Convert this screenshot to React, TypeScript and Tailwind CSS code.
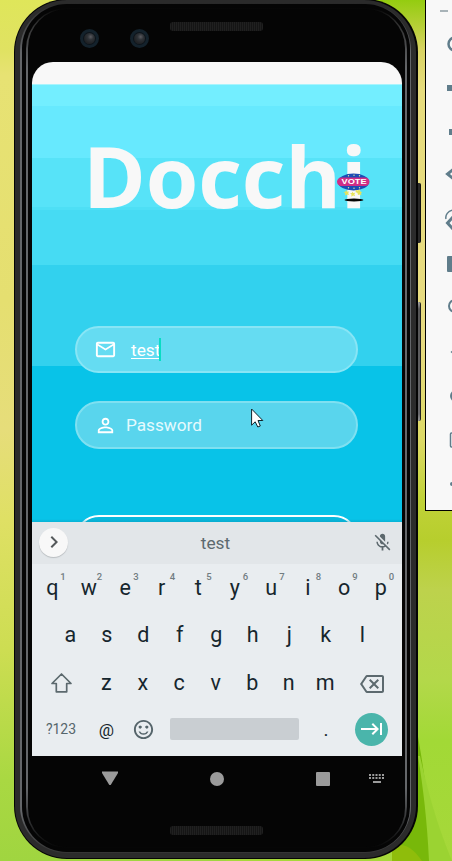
import type { ReactNode } from 'react';
import {
  MdChevronRight,
  MdKeyboardTab,
  MdMicOff,
  MdOutlineBackspace,
  MdOutlineMail,
  MdPersonOutline,
  MdSentimentSatisfiedAlt,
} from 'react-icons/md';

const topRow = ['q', 'w', 'e', 'r', 't', 'y', 'u', 'i', 'o', 'p'];
const homeRow = ['a', 's', 'd', 'f', 'g', 'h', 'j', 'k', 'l'];
const bottomRow = ['z', 'x', 'c', 'v', 'b', 'n', 'm'];

function Wallpaper() {
  return (
    <>
      <div className="absolute inset-0 bg-[linear-gradient(to_bottom,#dfe65a_0px,#e0e262_50px,#e7e273_75px,#e5df70_300px,#e6dd7a_430px,#dfe064_520px,#cddd52_650px,#a9d842_780px,#a0d540_861px)]" />
      <div className="absolute inset-y-0 left-[226px] right-0 bg-[linear-gradient(to_bottom,#94cc10_0px,#b5cf35_25px,#d8d363_50px,#e6dc7e_90px,#e6da80_340px,#dcd966_440px,#c0d238_500px,#b7ce2d_540px,#bdd24c_590px,#b3d84a_680px,#a2d936_740px,#a6d83a_861px)]" />
      <svg className="absolute bottom-0 right-0" width="60" height="240" viewBox="0 0 60 240" fill="none">
        <path d="M24 105C30 135 37 185 42 240H0V210L24 170Z" fill="#78b80a" />
        <path d="M28 135C38 180 46 205 60 240H37C35 195 30 160 26 135Z" fill="#9bd332" />
        <path d="M0 225C15 220 24 232 30 240H0Z" fill="#8fbd0b" />
      </svg>
    </>
  );
}

function Camera() {
  return (
    <div className="flex size-[19px] items-center justify-center rounded-full border-[3px] border-[#14222c] bg-[#0d141a]">
      <div className="size-[11px] rounded-full bg-[radial-gradient(circle_at_60%_35%,#5b5b60_0,#2f3338_30%,#1f2124_70%,#2c3034_100%)]" />
    </div>
  );
}

function Speaker() {
  return (
    <div className="h-[9px] w-[93px] rounded-[3px] bg-[repeating-linear-gradient(90deg,#202020_0_1px,#151515_1px_2px)]" />
  );
}

function VoteBadge() {
  return (
    <svg className="absolute left-[304px] top-[89px]" width="35" height="32" viewBox="0 0 35 32">
      <ellipse cx="17.5" cy="9" rx="15.5" ry="8.5" fill="#1b4cb4" />
      <g fill="#dfe7a0">
        <circle cx="12.5" cy="2.8" r=".7" />
        <circle cx="18" cy="2.3" r=".7" />
        <circle cx="23.5" cy="2.8" r=".7" />
        <circle cx="12.5" cy="14.8" r=".7" />
        <circle cx="18" cy="15.3" r=".7" />
        <circle cx="23.5" cy="14.8" r=".7" />
      </g>
      <rect x="1" y="4.5" width="32.5" height="8.6" rx="4.3" fill="#cf2d86" />
      <text x="5.6" y="11" textLength="25" lengthAdjust="spacingAndGlyphs" fontFamily="'Liberation Sans', sans-serif" fontWeight="700" fontSize="6.4" fill="#fff">
        VOTE
      </text>
      <g fill="#e8e35a">
        <path d="M10 17l1.2 1.8 2-.3-1 1.6.8 2-2-.7L9 22.5l.3-2.2L7.5 19l2-.2z" />
        <path d="M16 18.5l1.3 1.5 2-.3-1 1.6.8 2-2-.7-1.8 1.2.2-2.2-1.5-1.3 2-.2z" />
        <path d="M20 17l2 .5 1.5-1.2.5 2 2 1-1 1 .5 2-2-.8-1.5.5-.5-2-2-1z" />
      </g>
      <ellipse cx="18" cy="27" rx="9.5" ry="1.4" fill="#050505" />
    </svg>
  );
}

function Key({ children, hint }: { children: ReactNode; hint?: string }) {
  return (
    <div className="relative flex w-[36.5px] items-center justify-center">
      {children}
      {hint && (
        <span className="absolute right-0 top-[7px] w-[15px] text-center text-[9.5px] font-medium leading-[11px] text-[#717c81]">{hint}</span>
      )}
    </div>
  );
}

function Keyboard() {
  return (
    <div className="relative flex h-[235px] flex-col bg-[#e9edf0] text-[21.5px] text-[#16262d]">
      <div className="flex h-[42px] shrink-0 items-center bg-[#e2e6e9] pl-[7px] pr-[9px]">
        <div className="mb-[2px] flex size-[29px] items-center justify-center rounded-full bg-[#f8f8f8] text-[#55595b] shadow-[0_1px_1px_#b9bdc0]">
          <MdChevronRight size={24} />
        </div>
        <div className="flex-1 pr-[9px] pt-px text-center text-[17.3px] text-[#5d6a6f]">test</div>
        <MdMicOff size={21} className="mb-[2px] text-[#5c686d]" />
      </div>
      <div className="flex h-12 pl-[2px]">
        {topRow.map((letter, i) => (
          <Key key={letter} hint={String((i + 1) % 10)}>{letter}</Key>
        ))}
      </div>
      <div className="flex h-[47px] pl-[20px]">
        {homeRow.map((letter) => (
          <Key key={letter}>{letter}</Key>
        ))}
      </div>
      <div className="flex h-12 items-stretch">
        <div className="flex w-[56px] items-center justify-center pl-[2px]">
          <svg width="23" height="22" viewBox="0 0 23 22" fill="none" stroke="#5c696e" strokeWidth="1.7" strokeLinejoin="round">
            <path d="M11.5 2L21 11.5H16.7V19.8H6.3V11.5H2Z" />
          </svg>
        </div>
        {bottomRow.map((letter) => (
          <Key key={letter}>{letter}</Key>
        ))}
        <div className="flex w-[57px] items-center justify-center pt-[1px] text-[#5c696e]">
          <MdOutlineBackspace size={24} />
        </div>
      </div>
      <div className="flex h-[44px] items-center">
        <div className="w-[56px] pl-[2px] text-center text-[14px] text-[#56666c]">?123</div>
        <div className="w-[37px] pt-[3px] text-center text-[17px]">@</div>
        <div className="flex w-[36px] justify-center text-[#55646a]">
          <MdSentimentSatisfiedAlt size={23} />
        </div>
        <div className="ml-[9px] h-[22px] w-[129px] rounded-[2px] bg-[#c9ced2]" />
        <div className="w-[54px] pt-[2px] text-center text-[19px]">.</div>
        <div className="ml-[2px] flex size-[33px] items-center justify-center rounded-full bg-[#4ab5ab] text-white">
          <MdKeyboardTab size={24} />
        </div>
      </div>
    </div>
  );
}

function LoginScreen() {
  return (
    <div className="flex h-[694px] flex-col overflow-hidden rounded-t-[21px] bg-[#f8f8f8]">
      <div className="h-[22px] shrink-0" />
      <main className="relative flex h-[438px] shrink-0 flex-col overflow-hidden bg-[linear-gradient(to_bottom,#a9f4fd_0_1px,#73eeff_1px_22px,#67e9fe_22px_74px,#57e3f8_74px_123px,#4edff5_123px_126px,#46dbf3_126px_181px,#32d1ee_181px_282px,#08c3e8_282px)]">
        <h1 className="h-[242px] shrink-0 whitespace-nowrap pl-[51px] pt-[33px] font-['Open_Sans',sans-serif] text-[85px] font-bold leading-[117px] tracking-[-0.2px] text-[#f8f8f8]">
          Docchi
        </h1>
        <VoteBadge />
        <div className="ml-[43px] flex h-[47px] w-[283px] shrink-0 items-center rounded-full border-2 border-[#88e5f5] bg-[#65dcf2] pl-[17px] text-[17.3px] text-white">
          <MdOutlineMail size={23} />
          <span className="ml-[14px] leading-5 underline decoration-1 underline-offset-2">test</span>
          <span className="-ml-px h-[23px] w-[2px] bg-[#08dcc4]" />
        </div>
        <div className="ml-[43px] mt-[28px] flex h-[48px] w-[283px] shrink-0 items-center rounded-full border-2 border-[#7fe0f1] bg-[#59d5ed] pl-[17px] text-[17.2px] text-[#e5fafd]">
          <MdPersonOutline size={23} className="text-white" />
          <span className="ml-[9px] pt-[2px]">Password</span>
        </div>
        <div className="ml-[43px] mt-[66px] h-[48px] w-[283px] shrink-0 rounded-full border-2 border-white bg-[#09b8dd]" />
        <div className="absolute inset-x-0 bottom-0 h-[3px] bg-gradient-to-b from-transparent to-[#0799b8]/40" />
      </main>
      <Keyboard />
    </div>
  );
}

function NavigationBar() {
  return (
    <div className="flex h-[45px] items-center text-[#9b9b9b]">
      <svg className="ml-[70px]" width="16" height="15" viewBox="0 0 16 15" fill="currentColor">
        <path d="M0 .5H16V2L8.700 14H7.300L0 2Z" />
      </svg>
      <div className="ml-[92px] size-[14px] rounded-full bg-current" />
      <div className="ml-[92px] size-[14px] rounded-[1px] bg-current" />
      <svg className="ml-[39px]" width="15" height="9" viewBox="0 0 15 9" fill="currentColor">
        {[0, 3.25, 6.5, 9.75, 13].map((x) => (
          <g key={x}>
            <rect x={x} y="0" width="2" height="2" />
            <rect x={x} y="3" width="2" height="2" />
          </g>
        ))}
        <rect x="4" y="7" width="8" height="2" />
      </svg>
    </div>
  );
}

function Phone() {
  return (
    <>
      <div className="absolute left-[415px] top-[183px] h-[60px] w-[6px] rounded-r-[2px] border-r border-[#111] bg-[#292929]" />
      <div className="absolute left-[415px] top-[302px] h-[119px] w-[6px] rounded-r-[2px] border-r border-[#222] bg-[linear-gradient(to_bottom,#aaa_0,#555_7px,#67676a_112px,#999_100%)]" />
      <div className="absolute left-[14px] top-[-1px] h-[860px] w-[404px] rounded-[53px] bg-[#050505] py-px pl-px pr-[2px] font-[Roboto,sans-serif]">
        <div className="h-full rounded-[52px] bg-[#2b2b2b] pb-[5px] pl-[5px] pr-[5px] pt-[3px]">
          <div className="h-full rounded-[47px] bg-[linear-gradient(to_bottom,#292929_0,#636568_50px,#646669_810px,#343434_100%)] py-px pl-[2px] pr-px">
            <div className="h-full rounded-[45px] bg-[#050505] py-[4px] pl-[4px] pr-[3px]">
              <div className="h-full rounded-[41px] bg-[linear-gradient(to_bottom,#050505_0,#303030_15px,#65676a_60px,#65676a_780px,#050505_100%)] px-[2px] py-px">
                <div className="flex h-full flex-col rounded-[39px] bg-[#050505] pl-[4px] pr-[3px]">
                  <div className="flex h-[53px] shrink-0 items-start">
                    <div className="ml-[48px] mt-[20px]"><Camera /></div>
                    <div className="ml-[31px] mt-[20px]"><Camera /></div>
                    <div className="ml-[21px] mt-[13px]"><Speaker /></div>
                  </div>
                  <LoginScreen />
                  <NavigationBar />
                  <div className="ml-[138px] mt-[25px]"><Speaker /></div>
                </div>
              </div>
            </div>
          </div>
        </div>
      </div>
    </>
  );
}

function EmulatorToolbar() {
  return (
    <div className="absolute left-[425px] top-[-1px] h-[512px] w-[60px] border border-black bg-[#f8f8f8]">
      <svg width="27" height="510" viewBox="0 0 27 510" fill="none" stroke="#607d8b" strokeWidth="2">
        <path d="M14 11H22" stroke="#a8b3b8" />
        <circle cx="29" cy="44" r="6.5" strokeWidth="2.5" />
        <path d="M21 85H27V91H21Z" fill="#607d8b" stroke="none" />
        <path d="M23 129H27V135H23Z" fill="#607d8b" stroke="none" />
        <path d="M27 169.500L21.500 174L27 178.500" strokeWidth="3" />
        <path d="M20 219C19 215 22 211 27 210" strokeWidth="1.5" />
        <path d="M27 217L21.500 223L27 229" strokeWidth="3" />
        <rect x="21" y="256" width="12" height="16" rx="1" fill="#607d8b" stroke="none" />
        <circle cx="29" cy="306" r="6" />
        <path d="M24.500 352L27 350V354Z" fill="#607d8b" stroke="none" />
        <circle cx="30" cy="396" r="5" />
        <rect x="24.5" y="433" width="9" height="14" rx="1" strokeWidth="1.5" />
        <circle cx="26" cy="484" r="2" fill="#607d8b" stroke="none" />
      </svg>
    </div>
  );
}

export default function App() {
  return (
    <div className="relative h-[861px] w-[452px] overflow-hidden">
      <Wallpaper />
      <Phone />
      <EmulatorToolbar />
      <svg className="absolute left-[251px] top-[408px]" width="13" height="20" viewBox="0 0 13 20">
        <path d="M.6 1V17.200L4.200 13.800L6.800 19L9.300 18L7 12.500H11.800Z" fill="#fff" stroke="#10232a" strokeWidth="1" />
      </svg>
    </div>
  );
}
